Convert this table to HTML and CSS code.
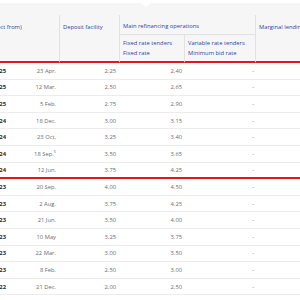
FILE: index.html
```html
<!DOCTYPE html>
<html lang="en">
<head>
  <meta charset="UTF-8">
  <title>Key ECB interest rates</title>
  <link rel="stylesheet" href="styles.css">
</head>
<body>
  <div class="rates-box">
    <table class="rates-table">
      <colgroup>
        <col class="col-year">
        <col class="col-date">
        <col class="col-deposit">
        <col class="col-fixed">
        <col class="col-variable">
        <col class="col-marginal">
      </colgroup>
      <thead>
        <tr class="head-top">
          <th colspan="2" rowspan="2" class="sep date-head">Date (with effect from)</th>
          <th rowspan="2" class="sep">Deposit facility</th>
          <th colspan="2" class="sep">Main refinancing operations</th>
          <th rowspan="2" class="last">Marginal lending facility</th>
        </tr>
        <tr class="head-sub">
          <th class="sep">Fixed rate tenders<br>Fixed rate</th>
          <th class="sep">Variable rate tenders<br>Minimum bid rate</th>
        </tr>
      </thead>
      <tbody>
        <tr><td class="year">2025</td><td>23 Apr.</td><td>2.25</td><td>2.40</td><td>-</td><td>2.65</td></tr>
        <tr><td class="year">2025</td><td>12 Mar.</td><td>2.50</td><td>2.65</td><td>-</td><td>2.90</td></tr>
        <tr><td class="year">2025</td><td>5 Feb.</td><td>2.75</td><td>2.90</td><td>-</td><td>3.15</td></tr>
        <tr><td class="year">2024</td><td>18 Dec.</td><td>3.00</td><td>3.15</td><td>-</td><td>3.40</td></tr>
        <tr><td class="year">2024</td><td>23 Oct.</td><td>3.25</td><td>3.40</td><td>-</td><td>3.65</td></tr>
        <tr><td class="year">2024</td><td>18 Sep.<sup>5</sup></td><td>3.50</td><td>3.65</td><td>-</td><td>3.90</td></tr>
        <tr class="marked"><td class="year">2024</td><td>12 Jun.</td><td>3.75</td><td>4.25</td><td>-</td><td>4.50</td></tr>
        <tr><td class="year">2023</td><td>20 Sep.</td><td>4.00</td><td>4.50</td><td>-</td><td>4.75</td></tr>
        <tr><td class="year">2023</td><td>2 Aug.</td><td>3.75</td><td>4.25</td><td>-</td><td>4.50</td></tr>
        <tr><td class="year">2023</td><td>21 Jun.</td><td>3.50</td><td>4.00</td><td>-</td><td>4.25</td></tr>
        <tr><td class="year">2023</td><td>10 May</td><td>3.25</td><td>3.75</td><td>-</td><td>4.00</td></tr>
        <tr><td class="year">2023</td><td>22 Mar.</td><td>3.00</td><td>3.50</td><td>-</td><td>3.75</td></tr>
        <tr><td class="year">2023</td><td>8 Feb.</td><td>2.50</td><td>3.00</td><td>-</td><td>3.25</td></tr>
        <tr><td class="year">2022</td><td>21 Dec.</td><td>2.00</td><td>2.50</td><td>-</td><td>2.75</td></tr>
      </tbody>
    </table>
  </div>
</body>
</html>
```

FILE: styles.css
```css
html, body {
  overflow: hidden;
}

body {
  margin: 3px 0 0 0;
  background-color: #ffffff;
  font-family: "Open Sans", "Liberation Sans", sans-serif;
}

.rates-box {
  position: relative;
  background: linear-gradient(#f6f6f7, #f6f6f7) top left / 100% 58px no-repeat;
  padding-top: 12px;
}

/* little white arrow from the tab above */
.rates-box::before {
  content: "";
  position: absolute;
  top: 0;
  left: 141px;
  border-left: 5px solid transparent;
  border-right: 5px solid transparent;
  border-top: 4px solid #ffffff;
}

.rates-table {
  table-layout: fixed;
  width: 402px;
  margin-left: -44px;
  border-collapse: separate;
  border-spacing: 0;
}

.col-year { width: 54px; }
.col-date { width: 50px; }
.col-deposit { width: 60px; }
.col-fixed { width: 65px; }
.col-variable { width: 71px; }
.col-marginal { width: 102px; }

.rates-table th {
  font-size: 5.8px;
  font-weight: normal;
  line-height: 10px;
  color: #2e3f9e;
  text-align: left;
  white-space: nowrap;
  padding: 0 3px;
  box-sizing: border-box;
}

.rates-table th.date-head {
  padding-left: 5px;
}

.rates-table th.sep {
  border-right: 1px solid #e2e2e4;
}

.head-top th {
  height: 20px;
  vertical-align: bottom;
  padding-bottom: 3px;
  border-bottom: 1px solid #e2e2e4;
}

.head-top th[rowspan="2"] {
  vertical-align: top;
  padding-top: 7px;
  border-bottom: 2px solid #e8141c;
}

.head-sub th {
  height: 28px;
  vertical-align: top;
  padding-top: 3px;
  border-bottom: 2px solid #e8141c;
}

.rates-table td {
  font-size: 5.8px;
  color: #6c6c6c;
  text-align: right;
  height: 16.6px;
  padding: 0 3px 0 0;
  box-sizing: border-box;
  border-bottom: 1px solid #ececec;
  white-space: nowrap;
}

.rates-table td.year {
  font-weight: bold;
  color: #2a2a2a;
  padding-right: 4px;
}

.rates-table td:nth-child(2),
.rates-table td:nth-child(3) {
  padding-right: 4px;
}

.rates-table td:nth-child(5) {
  padding-right: 2px;
}

.rates-table sup {
  font-size: 4px;
  line-height: 0;
}

.rates-table tr.marked td {
  border-bottom: 2px solid #e8141c;
}
```
